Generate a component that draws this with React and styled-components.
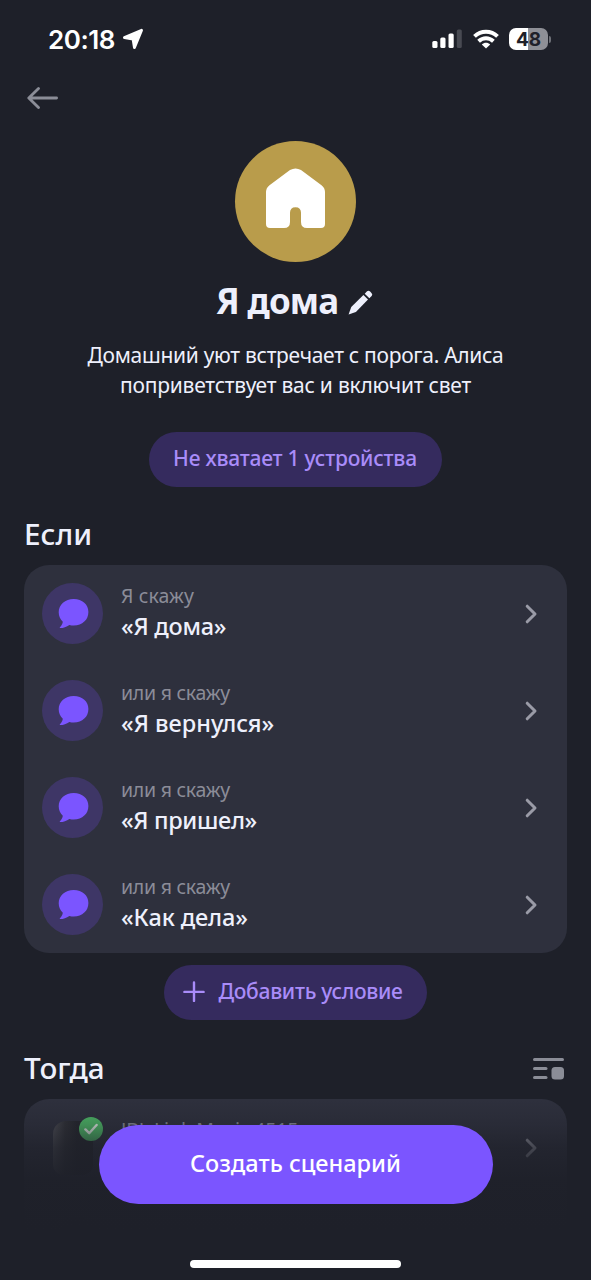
import React from "react";
import styled, { createGlobalStyle } from "styled-components";

const phrases = [
  { id: 1, label: "Я скажу", phrase: "«Я дома»", labelSpacing: 0.1, spacing: -0.25 },
  { id: 2, label: "или я скажу", phrase: "«Я вернулся»", labelSpacing: -0.27, spacing: 0 },
  { id: 3, label: "или я скажу", phrase: "«Я пришел»", labelSpacing: -0.27, spacing: -0.35 },
  { id: 4, label: "или я скажу", phrase: "«Как дела»", labelSpacing: -0.27, spacing: -0.1 },
];

const Chevron = () => (
  <svg width="14" height="20" viewBox="0 0 14 20" fill="none">
    <path d="M2.2 2.2L10 10L2.2 17.8" stroke="#9a9ba7" strokeWidth="3" strokeLinecap="round" strokeLinejoin="round" />
  </svg>
);

const App = () => {
  return (
    <Screen>
      <GlobalStyle />
      <StatusBar>
        <Clock>
          20:18
          <svg width="22" height="22" viewBox="0 0 22 22">
            <path d="M19.6 2.2L2.4 9.6L11 11L12.4 19.6Z" fill="#fff" stroke="#fff" strokeWidth="2.8" strokeLinejoin="round" />
          </svg>
        </Clock>
        <Indicators>
          <svg width="30" height="20" viewBox="0 0 30 20" fill="#fff">
            <rect x="0.3" y="12" width="5.2" height="7" rx="1.5" />
            <rect x="8.3" y="8.6" width="5.2" height="10.4" rx="1.5" />
            <rect x="16.5" y="4.4" width="5.2" height="14.6" rx="1.5" />
            <rect x="24.8" y="0.6" width="5" height="18.4" rx="1.5" fill="#484a52" />
          </svg>
          <svg width="26" height="20" viewBox="0 0 26 20" fill="none" stroke="#fff" strokeWidth="4">
            <path d="M1.5 7.4C8 1.2 18 1.2 24.5 7.4" />
            <path d="M5.6 12.2C10 8.2 16 8.2 20.4 12.2" />
            <path d="M13 19.6L8.8 15.4C11.2 13.3 14.8 13.3 17.2 15.4Z" fill="#fff" stroke="none" />
          </svg>
          <Battery>
            <Level>48</Level>
            <Nub />
          </Battery>
        </Indicators>
      </StatusBar>
      <NavBar>
        <svg width="32" height="24" viewBox="0 0 32 24" fill="none" stroke="#8b8d97" strokeWidth="2.8" strokeLinecap="round" strokeLinejoin="round">
          <path d="M29.6 12H2M11.5 2.4L1.8 12L11.5 21.6" />
        </svg>
      </NavBar>
      <Hero>
        <HomeIcon>
          <svg width="61" height="62" viewBox="0 0 61 62" fill="#fff">
            <path d="M25 3Q30.5 -0.2 36 3L56.5 18.2Q60 21 60 25V57Q60 61 56 61H42Q36 61 36 55V45.8Q36 40.2 30.5 40.2Q25 40.2 25 45.8V55Q25 61 19 61H5Q1 61 1 57V25Q1 21 4.5 18.2Z" />
          </svg>
        </HomeIcon>
        <Title>
          <span>Я дома</span>
          <svg width="25" height="25" viewBox="0 0 26 26" fill="#eef0fc">
            <path d="M0.6 25.4L3.4 17.6L16 5.2L20.8 10L8.2 22.8Z" />
            <path d="M17.4 3.8L19.8 1.4Q21.4 0 23 1.6L24.4 3Q26 4.6 24.6 6.2L22.2 8.6Z" />
          </svg>
        </Title>
        <Description>
          <Line $spacing={-0.29}>Домашний уют встречает с порога. Алиса</Line>
          <Line $spacing={-0.23}>поприветствует вас и включит свет</Line>
        </Description>
      </Hero>
      <Pill $width={293} $top={32} $spacing={-0.22} $shift={1}>
        <span>Не хватает 1 устройства</span>
      </Pill>
      <SectionHead $top={27}>
        <Heading>Если</Heading>
      </SectionHead>
      <Card>
        {phrases.map((item) => (
          <Row key={item.id}>
            <Avatar>
              <svg width="32" height="32" viewBox="0 0 32 32" fill="#7b55ff">
                <path d="M16.7 0.9C25.4 0.9 31.4 6.4 31.4 14C31.4 21.8 25.4 27.4 16.8 27.4C15.2 27.4 13.8 27.3 12.4 26.9C9.6 28.9 6.2 29.9 3.2 30.1C2.8 30.1 2.6 29.6 2.9 29.3C4.6 27.6 5.6 25.8 5.8 23.8C3.2 21.4 1.7 18 1.7 14.2C1.7 6.4 8.2 0.9 16.7 0.9Z" />
              </svg>
            </Avatar>
            <RowText>
              <Label $spacing={item.labelSpacing}>{item.label}</Label>
              <Phrase $spacing={item.spacing}>{item.phrase}</Phrase>
            </RowText>
            <Chevron />
          </Row>
        ))}
      </Card>
      <Pill $width={263} $top={12} $spacing={-0.3} $shift={5}>
        <svg width="22" height="22" viewBox="0 0 22 22" stroke="#a98cf9" strokeWidth="2.4" strokeLinecap="round">
          <path d="M11 2.4V21M1.4 11.9H20.6" />
        </svg>
        <span>Добавить условие</span>
      </Pill>
      <SectionHead $top={28}>
        <Heading>Тогда</Heading>
        <svg width="31" height="24" viewBox="0 0 31 24" fill="#8b8d97">
          <rect x="0" y="2" width="31" height="3" rx="1.5" />
          <rect x="0" y="11" width="14.5" height="3" rx="1.5" />
          <rect x="0" y="20" width="14.5" height="3" rx="1.5" />
          <rect x="18.5" y="11" width="12.5" height="12.5" rx="3.5" />
        </svg>
      </SectionHead>
      <Card>
        <Row>
          <Device>
            <Speaker />
            <Check>
              <svg width="14" height="12" viewBox="0 0 14 12" fill="none" stroke="#e8f5ea" strokeWidth="2.4" strokeLinecap="round" strokeLinejoin="round">
                <path d="M1.4 6.4L5.2 10.2L12.6 2" />
              </svg>
            </Check>
          </Device>
          <RowText>
            <Label $spacing={-0.1}>JBL Link Music 4515</Label>
          </RowText>
          <Chevron />
        </Row>
        <Row>
          <Device>
            <Speaker />
          </Device>
        </Row>
      </Card>
      <BottomBar>
        <CreateButton>Создать сценарий</CreateButton>
        <HomeIndicator />
      </BottomBar>
    </Screen>
  );
};

const GlobalStyle = createGlobalStyle`
  * {
    box-sizing: border-box;
  }
  body {
    margin: 0;
    background-color: #1e2029;
  }
`;
const Screen = styled.div`
  position: relative;
  display: flex;
  flex-direction: column;
  width: 591px;
  height: 1280px;
  padding: 0 24px;
  overflow: hidden;
  background-color: #1e2029;
  color: #eef0fc;
  font-family: "Noto Sans", "Open Sans", sans-serif;
  svg {
    flex-shrink: 0;
  }
`;
const StatusBar = styled.div`
  flex-shrink: 0;
  display: flex;
  justify-content: space-between;
  align-items: center;
  height: 78px;
  padding: 0 16px 0 24px;
`;
const Clock = styled.div`
  display: flex;
  align-items: center;
  gap: 7px;
  color: white;
  font-family: Inter, sans-serif;
  font-size: 26px;
  font-weight: 600;
  letter-spacing: -0.45px;
`;
const Indicators = styled.div`
  display: flex;
  align-items: center;
  gap: 10.5px;
`;
const Battery = styled.div`
  display: flex;
  align-items: center;
  gap: 1px;
`;
const Level = styled.div`
  display: flex;
  justify-content: center;
  align-items: center;
  width: 39px;
  height: 22px;
  border-radius: 7px;
  background: linear-gradient(90deg, white 48%, #8e8f96 48%);
  color: #1e2029;
  font-family: Inter, sans-serif;
  font-size: 19px;
  font-weight: 700;
`;
const Nub = styled.div`
  width: 2px;
  height: 7px;
  border-radius: 0 2px 2px 0;
  background-color: #6e7077;
`;
const NavBar = styled.div`
  flex-shrink: 0;
  display: flex;
  align-items: center;
  height: 40px;
  padding-left: 2.5px;
`;
const Hero = styled.div`
  display: flex;
  flex-direction: column;
  align-items: center;
  margin-top: 22.5px;
`;
const HomeIcon = styled.div`
  display: flex;
  justify-content: center;
  align-items: center;
  width: 121.5px;
  height: 121.5px;
  padding-bottom: 6px;
  border-radius: 50%;
  background-color: #b99c4b;
`;
const Title = styled.h1`
  display: flex;
  align-items: center;
  gap: 9.5px;
  height: 40px;
  margin: 18.5px 0 0;
  padding-right: 2px;
  font-size: 35px;
  font-weight: 700;
  line-height: 40px;
  letter-spacing: -0.8px;
  svg {
    margin-top: 4px;
  }
`;
const Description = styled.p`
  margin: 19px 0 0;
  font-size: 21px;
  line-height: 30.3px;
  text-align: center;
`;
const Line = styled.span`
  display: block;
  letter-spacing: ${({ $spacing }) => $spacing}px;
`;
const Pill = styled.button`
  flex-shrink: 0;
  align-self: center;
  display: flex;
  justify-content: center;
  align-items: center;
  gap: 13px;
  width: ${({ $width }) => $width}px;
  height: 55px;
  margin-top: ${({ $top }) => $top}px;
  padding: 0 ${({ $shift }) => $shift}px 3px 0;
  border: none;
  border-radius: 28px;
  background-color: #352b5e;
  color: #a98cf9;
  font-family: inherit;
  font-size: 21px;
  font-weight: 500;
  letter-spacing: ${({ $spacing }) => $spacing}px;
  white-space: nowrap;
`;
const SectionHead = styled.div`
  flex-shrink: 0;
  display: flex;
  justify-content: space-between;
  align-items: center;
  height: 40px;
  margin: ${({ $top }) => $top}px 0 11px;
  padding-right: 3px;
`;
const Heading = styled.h2`
  margin: 0;
  font-size: 29.7px;
  font-weight: 500;
  line-height: 40px;
`;
const Card = styled.div`
  flex-shrink: 0;
  border-radius: 25px;
  background-color: #2e303d;
`;
const Row = styled.div`
  display: flex;
  align-items: center;
  height: 97px;
  padding: 0 28px 0 18px;
`;
const Avatar = styled.div`
  flex-shrink: 0;
  display: flex;
  justify-content: center;
  align-items: center;
  width: 61px;
  height: 61px;
  border-radius: 50%;
  background-color: #3e3666;
`;
const RowText = styled.div`
  flex: 1;
  min-height: 65px;
  padding: 0 0 5px 18px;
  white-space: nowrap;
`;
const Label = styled.div`
  color: #8b8c98;
  font-size: 19.5px;
  line-height: 30px;
  letter-spacing: ${({ $spacing }) => $spacing}px;
`;
const Phrase = styled.div`
  font-size: 23.5px;
  font-weight: 500;
  line-height: 30px;
  letter-spacing: ${({ $spacing }) => $spacing}px;
`;
const Device = styled.div`
  position: relative;
  width: 61px;
  height: 61px;
  padding: 4px 0 0 11px;
`;
const Speaker = styled.div`
  width: 40px;
  height: 54px;
  border-radius: 13px 13px 10px 10px;
  background: linear-gradient(90deg, #4c4d54, #2f3036 30%, #24252c 60%);
`;
const Check = styled.div`
  position: absolute;
  top: 0;
  right: 0;
  display: flex;
  justify-content: center;
  align-items: center;
  width: 24px;
  height: 24px;
  border-radius: 50%;
  background-color: #4fbf69;
`;
const BottomBar = styled.div`
  position: absolute;
  left: 0;
  right: 0;
  bottom: 0;
  display: flex;
  flex-direction: column;
  align-items: center;
  height: 180px;
  padding-top: 25px;
  background: linear-gradient(
    rgba(30, 32, 41, 0),
    rgba(30, 32, 41, 0.3) 25px,
    rgba(30, 32, 41, 0.7) 48px,
    rgba(30, 32, 41, 0.95) 80px,
    #1e2029 130px
  );
`;
const CreateButton = styled.button`
  width: 394px;
  height: 79px;
  padding: 0 0 3px;
  border: none;
  border-radius: 40px;
  background-color: #7b55ff;
  color: white;
  font-family: inherit;
  font-size: 23.5px;
  font-weight: 500;
`;
const HomeIndicator = styled.div`
  width: 211px;
  height: 8px;
  margin-top: 56px;
  border-radius: 4px;
  background-color: white;
`;

export default App;
